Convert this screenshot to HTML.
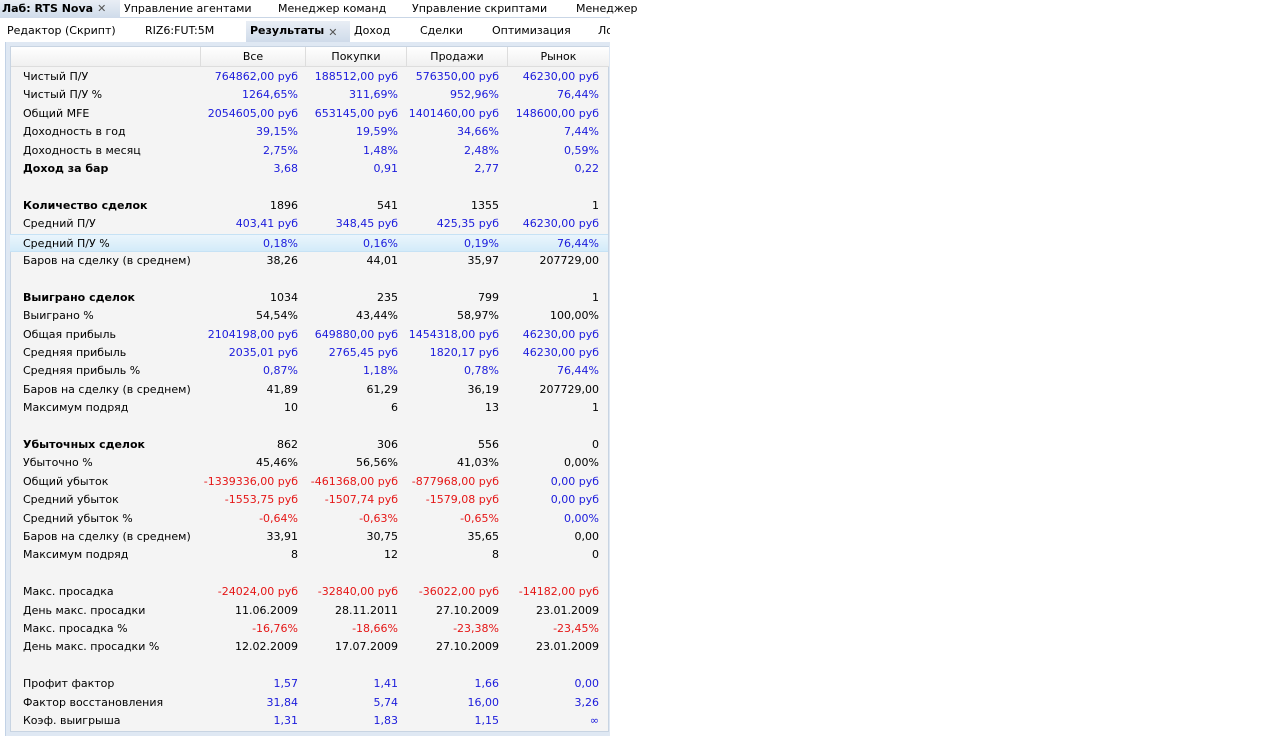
<!DOCTYPE html>
<html><head><meta charset="utf-8"><style>
*{margin:0;padding:0;box-sizing:border-box}
body{width:1276px;height:736px;background:#fff;font-family:"DejaVu Sans","Liberation Sans",sans-serif;font-size:11px;color:#000;position:relative;overflow:hidden}
.top{position:absolute;left:0;top:0;width:610px;height:18px;background:#fff;border-bottom:1px solid #c9d6e6}
.top span{position:absolute;top:2px;white-space:nowrap;font-size:11px}
.t1{left:0;top:0!important;height:18px;width:120px;background:linear-gradient(#e9eef5,#cfdbea);padding:2px 0 0 2px;font-weight:bold}
.x{color:#555;font-weight:normal;font-size:12px;margin-left:4px}
.sub{position:absolute;left:0;top:19px;width:610px;height:23px;background:#fff;overflow:hidden}
.sub span{position:absolute;top:5px;white-space:nowrap;font-size:11px}
.t2{top:2px!important;height:21px;background:linear-gradient(#e9eef5,#cfdbea);padding:3px 0 0 4px;font-weight:bold}
.panel{position:absolute;left:5px;top:42px;width:605px;height:694px;background:#dfe8f3;border-left:1px solid #c2d2e6}
.inner{position:absolute;left:4px;top:4px;width:599px;height:686px;background:#f4f4f4;border:1px solid #c8d4e2}
.hdr{position:absolute;left:0;top:0;height:20px;width:598px;background:linear-gradient(#fff,#f0f0f0);border-bottom:1px solid #ddd}
.hdr div{position:absolute;top:0;height:20px;text-align:center;line-height:20px;border-left:1px solid #ddd}
.row{position:absolute;left:0;width:598px;height:18.4px;line-height:18.4px;white-space:nowrap}
.row span{position:absolute;text-align:right}
.l{left:13px;text-align:left!important}
.c1{right:310px}.c2{right:210px}.c3{right:109px}.c4{right:9px}
.b{color:#1b1bdc}.r{color:#e51616}
.hl{background:linear-gradient(#eaf5fc,#d3ebf9);border-top:1px solid #c6e2f5;border-bottom:1px solid #c6e2f5}
</style></head><body>
<div class="top">
<span class="t1">Лаб: RTS Nova <span class="x">✕</span></span>
<span style="left:124px">Управление агентами</span>
<span style="left:278px">Менеджер команд</span>
<span style="left:412px">Управление скриптами</span>
<span style="left:576px">Менеджер</span>
</div>
<div class="sub">
<span style="left:7px">Редактор (Скрипт)</span>
<span style="left:145px">RIZ6:FUT:5M</span>
<span class="t2" style="left:246px;width:104px">Результаты <span class="x">✕</span></span>
<span style="left:354px">Доход</span>
<span style="left:420px">Сделки</span>
<span style="left:492px">Оптимизация</span>
<span style="left:598px">Лог</span>
</div>
<div class="panel"><div class="inner">
<div class="hdr">
<div style="left:189px;width:105px">Все</div>
<div style="left:294px;width:101px">Покупки</div>
<div style="left:395px;width:101px">Продажи</div>
<div style="left:496px;width:102px">Рынок</div>
</div>
</div></div>
<div style="position:absolute;left:10px;top:68px;width:598px">
<div class="row" style="top:0px"><span class="l">Чистый П/У</span><span class="c1 b">764862,00 руб</span><span class="c2 b">188512,00 руб</span><span class="c3 b">576350,00 руб</span><span class="c4 b">46230,00 руб</span></div>
<div class="row" style="top:18.4px"><span class="l">Чистый П/У %</span><span class="c1 b">1264,65%</span><span class="c2 b">311,69%</span><span class="c3 b">952,96%</span><span class="c4 b">76,44%</span></div>
<div class="row" style="top:36.8px"><span class="l">Общий MFE</span><span class="c1 b">2054605,00 руб</span><span class="c2 b">653145,00 руб</span><span class="c3 b">1401460,00 руб</span><span class="c4 b">148600,00 руб</span></div>
<div class="row" style="top:55.2px"><span class="l">Доходность в год</span><span class="c1 b">39,15%</span><span class="c2 b">19,59%</span><span class="c3 b">34,66%</span><span class="c4 b">7,44%</span></div>
<div class="row" style="top:73.6px"><span class="l">Доходность в месяц</span><span class="c1 b">2,75%</span><span class="c2 b">1,48%</span><span class="c3 b">2,48%</span><span class="c4 b">0,59%</span></div>
<div class="row" style="top:92px"><span class="l" style="font-weight:bold">Доход за бар</span><span class="c1 b">3,68</span><span class="c2 b">0,91</span><span class="c3 b">2,77</span><span class="c4 b">0,22</span></div>
<div class="row" style="top:128.8px"><span class="l" style="font-weight:bold">Количество сделок</span><span class="c1">1896</span><span class="c2">541</span><span class="c3">1355</span><span class="c4">1</span></div>
<div class="row" style="top:147.2px"><span class="l">Средний П/У</span><span class="c1 b">403,41 руб</span><span class="c2 b">348,45 руб</span><span class="c3 b">425,35 руб</span><span class="c4 b">46230,00 руб</span></div>
<div class="row hl" style="top:165.6px"><span class="l">Средний П/У %</span><span class="c1 b">0,18%</span><span class="c2 b">0,16%</span><span class="c3 b">0,19%</span><span class="c4 b">76,44%</span></div>
<div class="row" style="top:184px"><span class="l">Баров на сделку (в среднем)</span><span class="c1">38,26</span><span class="c2">44,01</span><span class="c3">35,97</span><span class="c4">207729,00</span></div>
<div class="row" style="top:220.8px"><span class="l" style="font-weight:bold">Выиграно сделок</span><span class="c1">1034</span><span class="c2">235</span><span class="c3">799</span><span class="c4">1</span></div>
<div class="row" style="top:239.2px"><span class="l">Выиграно %</span><span class="c1">54,54%</span><span class="c2">43,44%</span><span class="c3">58,97%</span><span class="c4">100,00%</span></div>
<div class="row" style="top:257.6px"><span class="l">Общая прибыль</span><span class="c1 b">2104198,00 руб</span><span class="c2 b">649880,00 руб</span><span class="c3 b">1454318,00 руб</span><span class="c4 b">46230,00 руб</span></div>
<div class="row" style="top:276px"><span class="l">Средняя прибыль</span><span class="c1 b">2035,01 руб</span><span class="c2 b">2765,45 руб</span><span class="c3 b">1820,17 руб</span><span class="c4 b">46230,00 руб</span></div>
<div class="row" style="top:294.4px"><span class="l">Средняя прибыль %</span><span class="c1 b">0,87%</span><span class="c2 b">1,18%</span><span class="c3 b">0,78%</span><span class="c4 b">76,44%</span></div>
<div class="row" style="top:312.8px"><span class="l">Баров на сделку (в среднем)</span><span class="c1">41,89</span><span class="c2">61,29</span><span class="c3">36,19</span><span class="c4">207729,00</span></div>
<div class="row" style="top:331.2px"><span class="l">Максимум подряд</span><span class="c1">10</span><span class="c2">6</span><span class="c3">13</span><span class="c4">1</span></div>
<div class="row" style="top:368px"><span class="l" style="font-weight:bold">Убыточных сделок</span><span class="c1">862</span><span class="c2">306</span><span class="c3">556</span><span class="c4">0</span></div>
<div class="row" style="top:386.4px"><span class="l">Убыточно %</span><span class="c1">45,46%</span><span class="c2">56,56%</span><span class="c3">41,03%</span><span class="c4">0,00%</span></div>
<div class="row" style="top:404.8px"><span class="l">Общий убыток</span><span class="c1 r">-1339336,00 руб</span><span class="c2 r">-461368,00 руб</span><span class="c3 r">-877968,00 руб</span><span class="c4 b">0,00 руб</span></div>
<div class="row" style="top:423.2px"><span class="l">Средний убыток</span><span class="c1 r">-1553,75 руб</span><span class="c2 r">-1507,74 руб</span><span class="c3 r">-1579,08 руб</span><span class="c4 b">0,00 руб</span></div>
<div class="row" style="top:441.6px"><span class="l">Средний убыток %</span><span class="c1 r">-0,64%</span><span class="c2 r">-0,63%</span><span class="c3 r">-0,65%</span><span class="c4 b">0,00%</span></div>
<div class="row" style="top:460px"><span class="l">Баров на сделку (в среднем)</span><span class="c1">33,91</span><span class="c2">30,75</span><span class="c3">35,65</span><span class="c4">0,00</span></div>
<div class="row" style="top:478.4px"><span class="l">Максимум подряд</span><span class="c1">8</span><span class="c2">12</span><span class="c3">8</span><span class="c4">0</span></div>
<div class="row" style="top:515.2px"><span class="l">Макс. просадка</span><span class="c1 r">-24024,00 руб</span><span class="c2 r">-32840,00 руб</span><span class="c3 r">-36022,00 руб</span><span class="c4 r">-14182,00 руб</span></div>
<div class="row" style="top:533.6px"><span class="l">День макс. просадки</span><span class="c1">11.06.2009</span><span class="c2">28.11.2011</span><span class="c3">27.10.2009</span><span class="c4">23.01.2009</span></div>
<div class="row" style="top:552px"><span class="l">Макс. просадка %</span><span class="c1 r">-16,76%</span><span class="c2 r">-18,66%</span><span class="c3 r">-23,38%</span><span class="c4 r">-23,45%</span></div>
<div class="row" style="top:570.4px"><span class="l">День макс. просадки %</span><span class="c1">12.02.2009</span><span class="c2">17.07.2009</span><span class="c3">27.10.2009</span><span class="c4">23.01.2009</span></div>
<div class="row" style="top:607.2px"><span class="l">Профит фактор</span><span class="c1 b">1,57</span><span class="c2 b">1,41</span><span class="c3 b">1,66</span><span class="c4 b">0,00</span></div>
<div class="row" style="top:625.6px"><span class="l">Фактор восстановления</span><span class="c1 b">31,84</span><span class="c2 b">5,74</span><span class="c3 b">16,00</span><span class="c4 b">3,26</span></div>
<div class="row" style="top:644px"><span class="l">Коэф. выигрыша</span><span class="c1 b">1,31</span><span class="c2 b">1,83</span><span class="c3 b">1,15</span><span class="c4 b">∞</span></div>
</div>
</body></html>
